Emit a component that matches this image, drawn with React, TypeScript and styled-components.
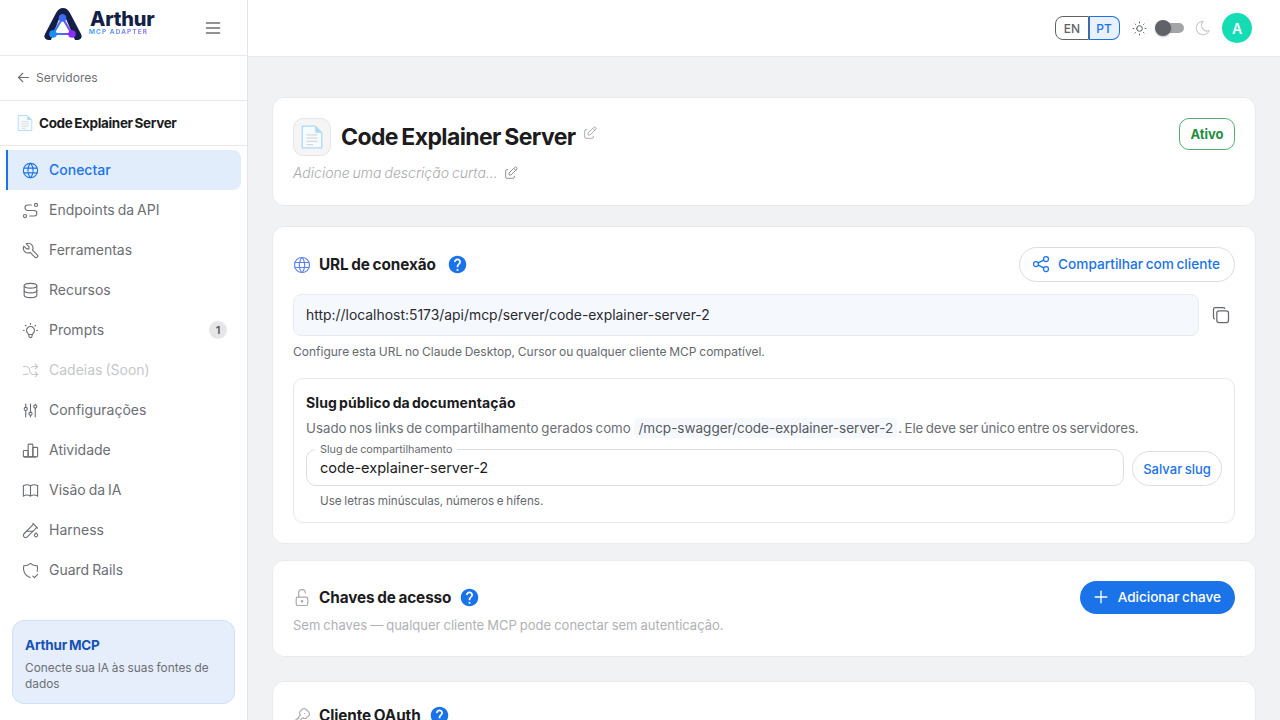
import React from "react";
import styled, { createGlobalStyle } from "styled-components";
import {
  TbWorld, TbRoute, TbTool, TbDatabase, TbBulb, TbArrowsShuffle, TbAdjustments, TbChartBar,
  TbBook, TbTestPipe, TbShieldCheck, TbCopy, TbShare, TbEdit, TbSun, TbMoon, TbLockOpen,
  TbKey, TbPlus, TbMenu2, TbArrowLeft,
} from "react-icons/tb";
import { MdHelp } from "react-icons/md";

const Global = createGlobalStyle`
  * { box-sizing: border-box; }
  html, body { margin: 0; height: 100%; }
  body { font-family: Inter, "Noto Sans", "Liberation Sans", sans-serif; background: #f1f2f4; color: #1c1c1e; overflow: hidden; }
  #root { height: 720px; }
`;

const Shell = styled.div`display: flex; height: 720px; overflow: hidden;`;

const Sidebar = styled.aside`
  width: 248px; flex: none; display: flex; flex-direction: column; background: #fff;
  border-right: 1px solid #e4e5e8;
`;
const LogoRow = styled.div`
  height: 56px; flex: none; display: flex; align-items: center; border-bottom: 1px solid #e8e9eb;
  padding: 0 24px 0 44px; justify-content: space-between;
`;
const Logo = styled.div`display: flex; align-items: center; gap: 7px; margin-top: -8px;`;
const LogoWords = styled.div`display: flex; flex-direction: column; line-height: 1;`;
const LogoName = styled.span`font-size: 20px; font-weight: 800; color: #141f47; letter-spacing: -0.2px; line-height: 17px; margin-left: 1px;`;
const LogoSub = styled.span`
  font-size: 6.5px; font-weight: 700; letter-spacing: 1.05px; line-height: 8px;
  background: linear-gradient(90deg, #3c9cf5, #9b6cf5); -webkit-background-clip: text; background-clip: text; color: transparent;
`;
const IconBtn = styled.span<{ $c?: string }>`display: inline-flex; color: ${(p) => p.$c || "#6b6f76"};`;
const BackRow = styled.div`
  height: 45px; flex: none; display: flex; align-items: center; gap: 4.5px; padding: 0 0 1px 14.5px;
  border-bottom: 1px solid #e8e9eb; font-size: 12.1px; color: #6e7178; word-spacing: -1px;
`;
const ServerRow = styled.div`
  height: 45px; flex: none; display: flex; align-items: center; gap: 5px; padding: 0 0 0 16px;
  border-bottom: 1px solid #e8e9eb; font-size: 13.5px; font-weight: 700; color: #1c1c1e; letter-spacing: -0.35px; word-spacing: -1px;
`;
const Nav = styled.nav`display: flex; flex-direction: column; padding: 4px 6px 0 6px;`;
const NavItem = styled.div<{ $active?: boolean; $off?: boolean }>`
  height: 40px; display: flex; align-items: center; gap: 9px; font-size: 14px;
  padding-left: ${(p) => (p.$active ? "13px" : "15px")};
  padding-right: 14px; word-spacing: -1px;
  color: ${(p) => (p.$active ? "#1a73e8" : p.$off ? "#c6c7ca" : "#6b6e74")};
  background: ${(p) => (p.$active ? "#e2edfb" : "transparent")};
  border-left: ${(p) => (p.$active ? "2px solid #1a73e8" : "0")};
  border-radius: ${(p) => (p.$active ? "0 8px 8px 0" : "0")};
  font-weight: ${(p) => (p.$active ? 500 : 400)};
`;
const NavLabel = styled.span`flex: 1; padding-bottom: 1px;`;
const Count = styled.span`
  width: 18px; height: 18px; border-radius: 50%; background: #e6e6e8; color: #55585e; font-size: 11px; font-weight: 600;
  display: flex; align-items: center; justify-content: center;
`;
const Promo = styled.div`
  margin: auto 12px 16px 12px; height: 84px; background: #e6eefb; border: 1px solid #cfe0f9; border-radius: 12px;
  padding: 15px 12px 0 12px;
`;
const PromoTitle = styled.div`font-size: 13.5px; font-weight: 700; color: #1652b8; line-height: 18px; letter-spacing: -0.2px; word-spacing: -1px;`;
const PromoText = styled.div`font-size: 11.85px; color: #6b6e74; line-height: 16px; margin-top: 6px; word-spacing: -0.5px;`;

const Column = styled.div`flex: 1; display: flex; flex-direction: column; min-width: 0;`;
const Header = styled.header`
  height: 57px; flex: none; background: #fff; border-bottom: 1px solid #e8e9eb; display: flex; align-items: center;
  justify-content: flex-end; padding: 0 28px 0 0;
`;
const LangGroup = styled.div`display: flex; height: 24px;`;
const LangBtn = styled.span<{ $on?: boolean }>`
  width: ${(p) => (p.$on ? "31px" : "34px")}; display: flex; align-items: center; justify-content: center; font-size: 12px; font-weight: 500;
  border: 1px solid ${(p) => (p.$on ? "#1a73e8" : "#5f6368")};
  border-left-width: ${(p) => (p.$on ? "0" : "1px")};
  color: ${(p) => (p.$on ? "#1a73e8" : "#5f6368")};
  background: ${(p) => (p.$on ? "#e9f1fd" : "#fff")};
  border-radius: ${(p) => (p.$on ? "0 8px 8px 0" : "8px 0 0 8px")};
  box-shadow: ${(p) => (p.$on ? "inset 1px 0 0 #1a73e8" : "none")};
`;
const Sun = styled(IconBtn)`margin-left: 11px;`;
const Toggle = styled.span`position: relative; width: 29px; height: 16px; margin: 0 10px 0 7px; display: block;`;
const Track = styled.span`position: absolute; left: 3px; top: 3px; width: 26px; height: 10px; border-radius: 5px; background: #a2a4a7;`;
const Thumb = styled.span`position: absolute; left: 0; top: 0; width: 16px; height: 16px; border-radius: 50%; background: #5f6368; box-shadow: 0 1px 2px rgba(0,0,0,.25);`;
const Avatar = styled.span`
  width: 30px; height: 30px; border-radius: 50%; background: #14dcb4; color: #fff; font-size: 14px; font-weight: 600;
  display: flex; align-items: center; justify-content: center; margin-left: 10px;
`;

const Main = styled.main`flex: 1; overflow: hidden; padding: 40px 24px 0 24px; display: flex; flex-direction: column;`;
const Card = styled.section<{ $h?: number; $mb?: number; $pt?: number }>`
  flex: none; background: #fff; border: 1px solid #e9eaec; border-radius: 12px; padding: ${(p) => p.$pt ?? 20}px 20px 20px;
  ${(p) => (p.$h ? `height: ${p.$h}px;` : "")}
  margin-bottom: ${(p) => p.$mb ?? 0}px;
`;
const HeadRow = styled.div`display: flex; align-items: flex-start; justify-content: space-between;`;
const TitleGroup = styled.div`display: flex; align-items: center; gap: 10px;`;
const DocBox = styled.div`
  width: 38px; height: 38px; border-radius: 10px; background: #f5f5f6; border: 1px solid #e6e6e8; display: flex; align-items: center; justify-content: center;
`;
const PageTitle = styled.h1`margin: 0; font-size: 23px; font-weight: 700; color: #1c1c1e; letter-spacing: -0.6px; word-spacing: -1.5px; line-height: 38px;`;
const TitleEdit = styled(IconBtn)`margin: -8px 0 0 -4px;`;
const Status = styled.span`
  width: 56px; height: 32px; border-radius: 10px; border: 1px solid #55ad70; color: #1f8f3f; font-size: 13px; font-weight: 700;
  display: flex; align-items: center; justify-content: center;
`;
const Desc = styled.div`
  display: flex; align-items: center; gap: 5px; margin-top: 6px; font-size: 14px; font-style: italic; color: #a9a9ac; line-height: 22px; font-weight: 300; word-spacing: -1px;
`;
const SectionHead = styled.div`display: flex; align-items: center; justify-content: space-between;`;
const SectionTitleRow = styled.div`display: flex; align-items: center;`;
const SectionIcon = styled(IconBtn)`width: 27px; margin-left: -1px;`;
const SectionTitle = styled.h2`margin: 0; font-size: 15.3px; font-weight: 700; color: #1c1c1e; letter-spacing: -0.1px; word-spacing: -0.8px;`;
const Help = styled(IconBtn)<{ $ml?: number }>`margin-left: ${(p) => p.$ml ?? 8}px; color: #1a73e8;`;
const OutlineBtn = styled.button`
  height: 35px; padding: 0 14px 1px 11px; border-radius: 18px; border: 1px solid #dcdde0; background: #fff; color: #1a73e8; font: 500 13.65px Inter, sans-serif;
  display: flex; align-items: center; gap: 7.5px; word-spacing: -1px; white-space: nowrap;
`;
const UrlRow = styled.div`display: flex; align-items: center; margin-top: 12px;`;
const UrlBox = styled.div`
  flex: 1; height: 42px; background: #f5f8fd; border: 1px solid #e8ecf2; border-radius: 8px; padding: 0 12px 1px; display: flex; align-items: center;
  font-size: 13.92px; color: #2a2a2e;
`;
const CopyBtn = styled(IconBtn)`width: 36px; justify-content: flex-end; padding-right: 4px;`;
const Hint = styled.div`font-size: 12px; color: #66696f; line-height: 16px; margin-top: 8px; word-spacing: -0.6px;`;
const SlugBox = styled.div`
  margin-top: 18px; height: 145px; border: 1px solid #e8e9eb; border-radius: 10px; padding: 14px 12px 0 12px;
`;
const SlugTitle = styled.div`font-size: 14px; font-weight: 700; color: #1c1c1e; line-height: 20px; letter-spacing: 0.1px; word-spacing: -1.3px;`;
const SlugDesc = styled.div`font-size: 13.3px; color: #6b6e74; line-height: 22px; margin-top: 4px; word-spacing: -1px; white-space: nowrap;`;
const CodeChip = styled.code`
  font-family: inherit; font-size: 13.5px; background: #f5f8fd; padding: 2px 4px; margin: 0 1px; border-radius: 4px; color: #55585e; word-spacing: 0;
`;
const SlugTail = styled.span`letter-spacing: -0.1px;`;
const SlugRow = styled.div`display: flex; align-items: flex-end; gap: 8px; margin-top: 10px;`;
const Field = styled.div`position: relative; flex: 1; height: 37px; border: 1px solid #dcdde0; border-radius: 10px; padding: 0 13px; display: flex; align-items: center;`;
const FieldLabel = styled.label`
  position: absolute; left: 8px; top: -7px; padding: 0 5px; background: #fff; font-size: 10.8px; color: #66696f; line-height: 13px; word-spacing: -0.7px;
`;
const FieldInput = styled.input`
  border: 0; outline: 0; padding: 0; width: 100%; background: transparent; font: 400 14.55px Inter, sans-serif; color: #1c1c1e;
`;
const SaveBtn = styled(OutlineBtn)`padding: 0; font-size: 13px; width: 90px; justify-content: center;`;
const SlugHint = styled(Hint)`margin: 7px 0 0 14px; font-size: 11.7px;`;
const PrimaryBtn = styled.button`
  height: 33px; padding: 0 14px 1px 11px; border-radius: 17px; border: 0; background: #1a73e8; color: #fff; font: 500 13.55px Inter, sans-serif;
  display: flex; align-items: center; gap: 7px; word-spacing: -1px; white-space: nowrap;
`;
const Muted = styled.div`font-size: 13px; color: #b0b1b4; line-height: 18px; margin-top: 2px; word-spacing: -0.6px;`;

const DocIcon = ({ size }: { size: number }) => (
  <svg width={size} height={size} viewBox="0 0 24 24" fill="none">
    <path d="M3 2h12l6 6v14H3z" fill="#f7fbfe" stroke="#aedaf5" strokeWidth="1.2" />
    <path d="M15 2v6h6z" fill="#aedaf5" />
    <path d="M7 10h10M7 13h10M7 16h10M7 19h6" stroke="#d5d8dc" strokeWidth="1.2" />
  </svg>
);

const LogoMark = () => (
  <svg width="38" height="32" viewBox="0 0 38 32" fill="none">
    <defs>
      <linearGradient id="lg" x1="9" y1="26" x2="28" y2="26" gradientUnits="userSpaceOnUse">
        <stop offset="0" stopColor="#1e8df5" />
        <stop offset="1" stopColor="#8a3df5" />
      </linearGradient>
    </defs>
    <path d="M1 26L12 5C14 1.500 16 0 19 0s5 1.500 7 5l11 21c1.500 3 0 6-3 6H4c-3 0-4.500-3-3-6z" fill="#141f47" />
    <path d="M7 32L16 8.500C17 6 20 6 21 8.500L31 32z" fill="#fff" />
    <path d="M18.500 10L9 26h19z" stroke="url(#lg)" strokeWidth="2.2" strokeLinejoin="round" />
    <circle cx="18.500" cy="10" r="3.800" fill="#3f6cf2" />
    <circle cx="9" cy="26" r="3.800" fill="#1e8df5" />
    <circle cx="28" cy="26" r="3.800" fill="#8a2df5" />
  </svg>
);

const items: { label: string; icon: React.ElementType; active?: boolean; off?: boolean; count?: number }[] = [
  { label: "Conectar", icon: TbWorld, active: true },
  { label: "Endpoints da API", icon: TbRoute },
  { label: "Ferramentas", icon: TbTool },
  { label: "Recursos", icon: TbDatabase },
  { label: "Prompts", icon: TbBulb, count: 1 },
  { label: "Cadeias (Soon)", icon: TbArrowsShuffle, off: true },
  { label: "Configurações", icon: TbAdjustments },
  { label: "Atividade", icon: TbChartBar },
  { label: "Visão da IA", icon: TbBook },
  { label: "Harness", icon: TbTestPipe },
  { label: "Guard Rails", icon: TbShieldCheck },
];

export default function App() {
  return (
    <Shell>
      <Global />
      <Sidebar>
        <LogoRow>
          <Logo>
            <LogoMark />
            <LogoWords>
              <LogoName>Arthur</LogoName>
              <LogoSub>MCP ADAPTER</LogoSub>
            </LogoWords>
          </Logo>
          <IconBtn><TbMenu2 size={20} strokeWidth={1.6} /></IconBtn>
        </LogoRow>
        <BackRow><IconBtn><TbArrowLeft size={17} strokeWidth={1.5} /></IconBtn>Servidores</BackRow>
        <ServerRow><DocIcon size={18} />Code Explainer Server</ServerRow>
        <Nav>
          {items.map((it) => {
            const I = it.icon;
            return (
              <NavItem key={it.label} $active={it.active} $off={it.off}>
                <I size={19} strokeWidth={1.4} />
                <NavLabel>{it.label}</NavLabel>
                {it.count ? <Count>{it.count}</Count> : null}
              </NavItem>
            );
          })}
        </Nav>
        <Promo>
          <PromoTitle>Arthur MCP</PromoTitle>
          <PromoText>Conecte sua IA às suas fontes de dados</PromoText>
        </Promo>
      </Sidebar>
      <Column>
        <Header>
          <LangGroup>
            <LangBtn>EN</LangBtn>
            <LangBtn $on>PT</LangBtn>
          </LangGroup>
          <Sun $c="#55585e"><TbSun size={17} strokeWidth={1.4} /></Sun>
          <Toggle><Track /><Thumb /></Toggle>
          <IconBtn $c="#c9cacc"><TbMoon size={18} strokeWidth={1.4} /></IconBtn>
          <Avatar>A</Avatar>
        </Header>
        <Main>
          <Card $h={109} $mb={20}>
            <HeadRow>
              <TitleGroup>
                <DocBox><DocIcon size={26} /></DocBox>
                <PageTitle>Code Explainer Server</PageTitle>
                <TitleEdit $c="#a9a9ac"><TbEdit size={16} strokeWidth={1.4} /></TitleEdit>
              </TitleGroup>
              <Status>Ativo</Status>
            </HeadRow>
            <Desc>Adicione uma descrição curta...<IconBtn $c="#8a8b8e"><TbEdit size={16} strokeWidth={1.4} /></IconBtn></Desc>
          </Card>
          <Card $h={318} $mb={16}>
            <SectionHead>
              <SectionTitleRow>
                <SectionIcon $c="#5c84f0"><TbWorld size={20} strokeWidth={1.4} /></SectionIcon>
                <SectionTitle>URL de conexão</SectionTitle>
                <Help $ml={11}><MdHelp size={21} /></Help>
              </SectionTitleRow>
              <OutlineBtn><TbShare size={20} strokeWidth={1.5} />Compartilhar com cliente</OutlineBtn>
            </SectionHead>
            <UrlRow>
              <UrlBox>http://localhost:5173/api/mcp/server/code-explainer-server-2</UrlBox>
              <CopyBtn $c="#66696f"><TbCopy size={20} strokeWidth={1.5} /></CopyBtn>
            </UrlRow>
            <Hint>Configure esta URL no Claude Desktop, Cursor ou qualquer cliente MCP compatível.</Hint>
            <SlugBox>
              <SlugTitle>Slug público da documentação</SlugTitle>
              <SlugDesc>Usado nos links de compartilhamento gerados como <CodeChip>/mcp-swagger/code-explainer-server-2</CodeChip><SlugTail>. Ele deve ser único entre os servidores.</SlugTail></SlugDesc>
              <SlugRow>
                <Field>
                  <FieldLabel>Slug de compartilhamento</FieldLabel>
                  <FieldInput readOnly value="code-explainer-server-2" />
                </Field>
                <SaveBtn>Salvar slug</SaveBtn>
              </SlugRow>
              <SlugHint>Use letras minúsculas, números e hífens.</SlugHint>
            </SlugBox>
          </Card>
          <Card $h={97} $mb={24}>
            <SectionHead>
              <SectionTitleRow>
                <SectionIcon $c="#a9a9ac"><TbLockOpen size={20} strokeWidth={1.4} /></SectionIcon>
                <SectionTitle>Chaves de acesso</SectionTitle>
                <Help><MdHelp size={21} /></Help>
              </SectionTitleRow>
              <PrimaryBtn><TbPlus size={20} strokeWidth={1.6} />Adicionar chave</PrimaryBtn>
            </SectionHead>
            <Muted>Sem chaves — qualquer cliente MCP pode conectar sem autenticação.</Muted>
          </Card>
          <Card $pt={23}>
            <SectionHead>
              <SectionTitleRow>
                <SectionIcon $c="#a9a9ac"><TbKey size={20} strokeWidth={1.4} /></SectionIcon>
                <SectionTitle>Cliente OAuth</SectionTitle>
                <Help><MdHelp size={21} /></Help>
              </SectionTitleRow>
            </SectionHead>
          </Card>
        </Main>
      </Column>
    </Shell>
  );
}
